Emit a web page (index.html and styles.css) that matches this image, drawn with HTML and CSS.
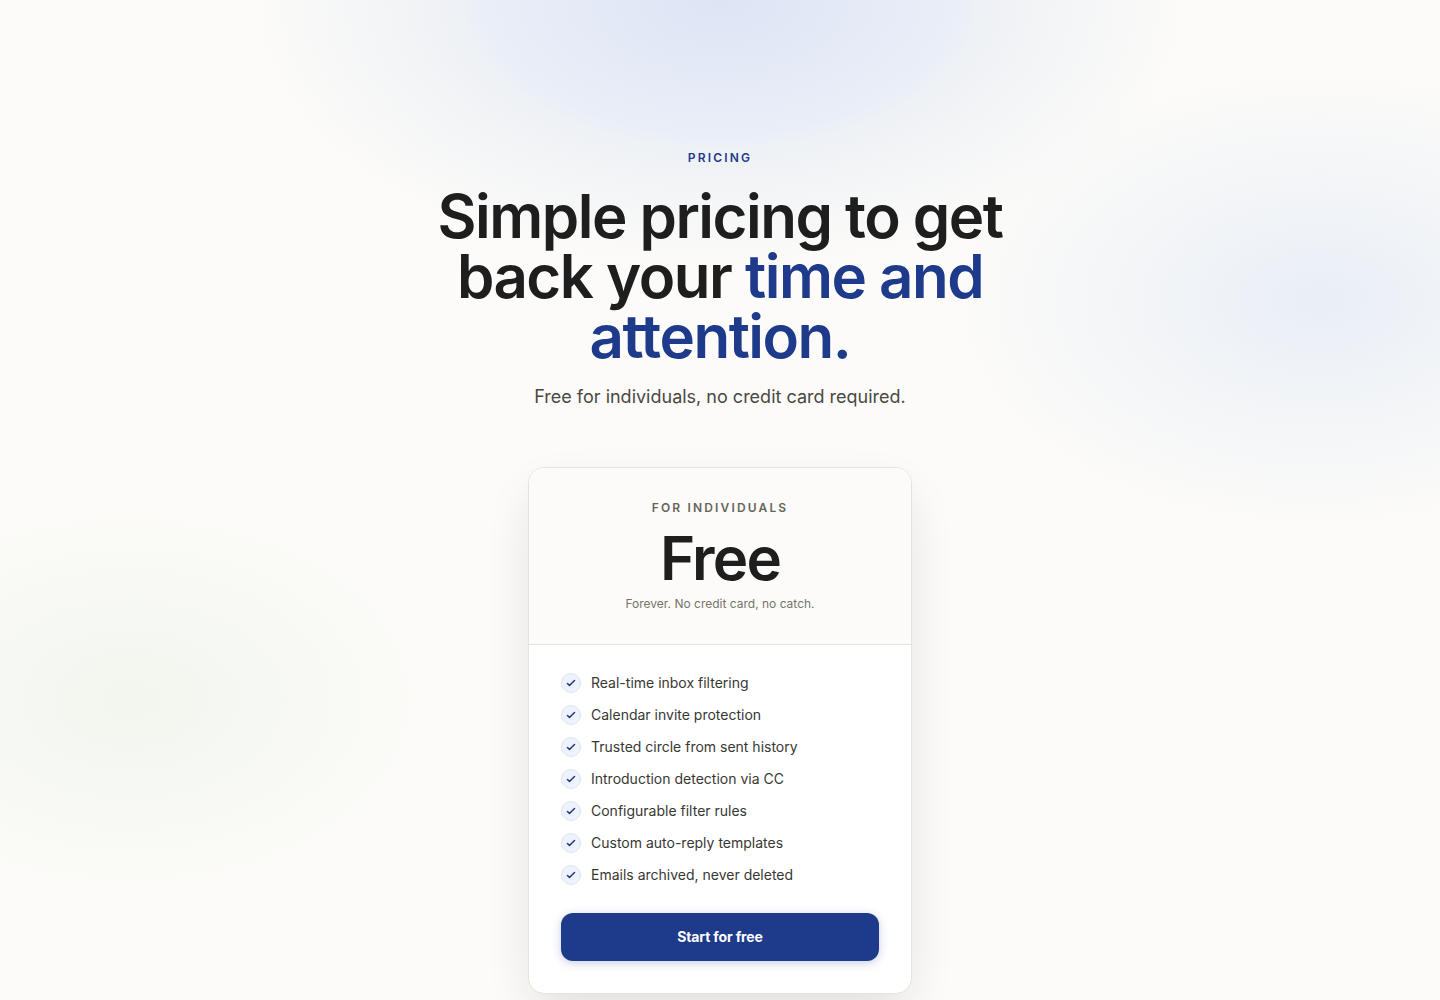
FILE: index.html
```html
<!DOCTYPE html>
<html lang="en">
<head>
<meta charset="utf-8">
<meta name="viewport" content="width=device-width, initial-scale=1">
<title>Pricing</title>
<link rel="stylesheet" href="styles.css">
</head>
<body>
<svg class="sprite" aria-hidden="true">
  <symbol id="check" viewBox="0 0 24 24"><path d="M5 13l4 4L19 7" fill="none" stroke="currentColor" stroke-width="3" stroke-linecap="round" stroke-linejoin="round"/></symbol>
</svg>
<main class="pricing">
  <header class="intro">
    <p class="eyebrow">Pricing</p>
    <h1 class="title">Simple pricing to get back your <span class="accent">time and attention.</span></h1>
    <p class="lead">Free for individuals, no credit card required.</p>
  </header>
  <section class="plan" aria-labelledby="plan-name">
    <div class="plan-head">
      <h2 class="plan-name" id="plan-name">For individuals</h2>
      <p class="price">Free</p>
      <p class="note">Forever. No credit card, no catch.</p>
    </div>
    <div class="plan-body">
      <ul class="features">
        <li class="feature"><span class="tick"><svg class="tick-icon" aria-hidden="true"><use href="#check"/></svg></span>Real-time inbox filtering</li>
        <li class="feature"><span class="tick"><svg class="tick-icon" aria-hidden="true"><use href="#check"/></svg></span>Calendar invite protection</li>
        <li class="feature"><span class="tick"><svg class="tick-icon" aria-hidden="true"><use href="#check"/></svg></span>Trusted circle from sent history</li>
        <li class="feature"><span class="tick"><svg class="tick-icon" aria-hidden="true"><use href="#check"/></svg></span>Introduction detection via CC</li>
        <li class="feature"><span class="tick"><svg class="tick-icon" aria-hidden="true"><use href="#check"/></svg></span>Configurable filter rules</li>
        <li class="feature"><span class="tick"><svg class="tick-icon" aria-hidden="true"><use href="#check"/></svg></span>Custom auto-reply templates</li>
        <li class="feature"><span class="tick"><svg class="tick-icon" aria-hidden="true"><use href="#check"/></svg></span>Emails archived, never deleted</li>
      </ul>
      <button class="cta" type="button">Start for free</button>
    </div>
  </section>
</main>
</body>
</html>
```
FILE: styles.css
```css
* {
  box-sizing: border-box;
  margin: 0;
  padding: 0;
}

body {
  min-height: 100vh;
  font-family: Inter, sans-serif;
  color: #1e1e1e;
  background:
    radial-gradient(ellipse 470px 270px at 50% 0, #dde4f4 0%, #eaeef8 50%, #eef1f5 55%, #fcfbf900 100%) no-repeat,
    radial-gradient(ellipse 370px 230px at 1320px 300px, #e9eef7 0%, #f0f3f7 35%, #fcfbf900 100%) no-repeat,
    radial-gradient(ellipse 310px 200px at 130px 700px, #f2f6ee 0%, #fcfbf900 100%) no-repeat,
    #fcfbf9;
}

.sprite {
  display: none;
}

.pricing {
  display: flex;
  flex-direction: column;
  align-items: center;
  gap: 56px;
  padding: 150px 24px 96px;
}

.intro {
  display: flex;
  flex-direction: column;
  align-items: center;
  max-width: 640px;
  text-align: center;
}

.eyebrow,
.plan-name {
  font-size: 12px;
  line-height: 16px;
  font-weight: 600;
  letter-spacing: 0.18em;
  text-transform: uppercase;
}

.eyebrow {
  margin-bottom: 20px;
  color: #1e3a8a;
}

.title,
.price {
  font-size: 60px;
  line-height: 60px;
  font-weight: 600;
  letter-spacing: -0.025em;
}

.title {
  margin-bottom: 16px;
}

.accent {
  color: #1e3a8a;
}

.lead {
  font-size: 18px;
  line-height: 29px;
  color: #494942;
}

.plan {
  width: 100%;
  max-width: 384px;
  overflow: hidden;
  border: 1px solid #e5e4dc;
  border-radius: 16px;
  background: #fff;
  box-shadow: 0 20px 50px -10px rgba(30, 30, 30, 0.15);
}

.plan-head {
  padding: 32px;
  text-align: center;
  background: #fcfbf9;
  border-bottom: 1px solid #e5e4dc;
}

.plan-name {
  margin-bottom: 12px;
  color: #65655a;
}

.price {
  margin-bottom: 8px;
  letter-spacing: -0.03em;
}

.note {
  font-size: 12px;
  line-height: 16px;
  color: #75756a;
}

.plan-body {
  padding: 28px 32px 32px;
}

.features {
  display: flex;
  flex-direction: column;
  gap: 12px;
  margin-bottom: 28px;
  list-style: none;
}

.feature {
  display: flex;
  align-items: center;
  gap: 10px;
  font-size: 14px;
  line-height: 20px;
  color: #383833;
}

.tick {
  display: flex;
  flex: none;
  align-items: center;
  justify-content: center;
  width: 20px;
  height: 20px;
  border: 1px solid #dde4f5;
  border-radius: 50%;
  color: #1e3a8a;
  background: #eef2fb;
}

.tick-icon {
  width: 12px;
  height: 12px;
}

.cta {
  width: 100%;
  height: 48px;
  border: 0;
  border-radius: 12px;
  font: 700 14px/20px Inter, sans-serif;
  letter-spacing: -0.01em;
  color: #fff;
  background: #1e3a8a;
  box-shadow: 0 2px 10px rgba(30, 58, 138, 0.25);
  cursor: pointer;
}
```
